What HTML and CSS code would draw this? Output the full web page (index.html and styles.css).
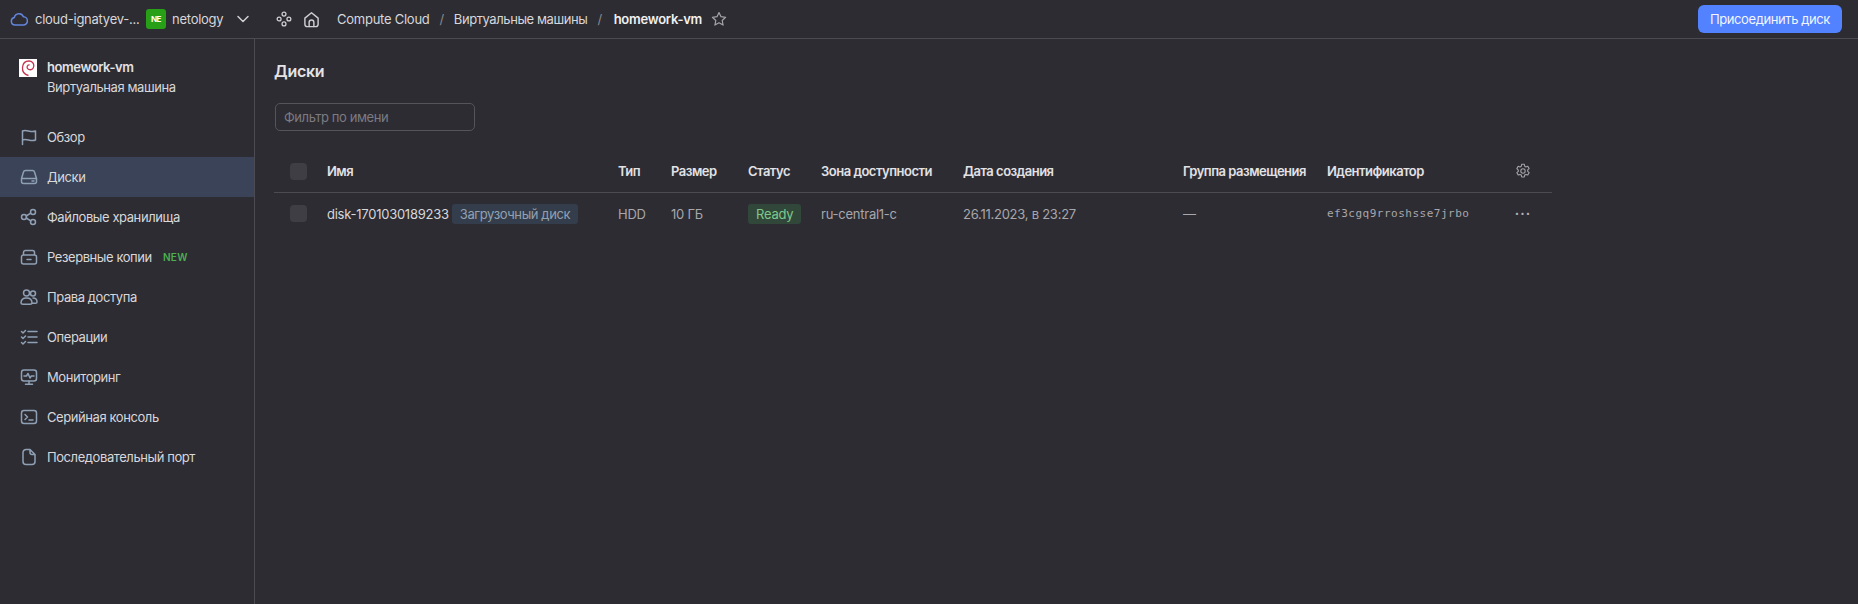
FILE: index.html
```html
<!DOCTYPE html>
<html lang="ru">
<head>
<meta charset="utf-8">
<title>Диски</title>
<link rel="stylesheet" href="styles.css">
</head>
<body>
<header class="topbar">
  <svg class="ico cloud" viewBox="0 0 18 18"><path d="M5 15a3.800 3.800 0 0 1-.7-7.500 4.800 4.800 0 0 1 9.100-.7A4.100 4.100 0 0 1 13.200 15z"/></svg>
  <span class="tb-text lat cloud-name">cloud-ignatyev-...</span>
  <span class="org-badge">NE</span>
  <span class="tb-text lat org-name">netology</span>
  <svg class="ico chev" viewBox="0 0 16 16"><path d="M3 5.500l5 5 5-5"/></svg>
  <svg class="ico services" viewBox="0 0 18 18"><circle cx="9" cy="3.500" r="2.200"/><circle cx="3.500" cy="9" r="2.200"/><circle cx="14.500" cy="9" r="2.200"/><circle cx="9" cy="14.500" r="2.200"/></svg>
  <svg class="ico home" viewBox="0 0 18 18"><path d="M2 7.500L9 1.800l7 5.700V14a2.500 2.500 0 0 1-2.500 2.500h-9A2.500 2.500 0 0 1 2 14z"/><path d="M6.500 16.500V12a2.500 2.500 0 0 1 5 0v4.500"/></svg>
  <nav class="crumbs">
    <span class="lat">Compute Cloud</span><span class="sep">/</span><span>Виртуальные машины</span><span class="sep">/</span><span class="lat cur">homework-vm</span>
  </nav>
  <svg class="ico star" viewBox="0 0 16 16"><path d="M8 1.500l2 4.200 4.600.6-3.400 3.200.9 4.600L8 11.800l-4.100 2.300.9-4.600L1.400 6.300 6 5.700z"/></svg>
  <button class="primary">Присоединить диск</button>
</header>
<div class="body">
  <aside class="side">
    <div class="vm">
      <svg class="debian" viewBox="0 0 18 18"><rect width="18" height="18" fill="#fff"/><path d="M9.500 16.500C5.500 15.500 3.200 12.500 3.500 8.500 3.800 4.500 6.500 2 10 2c3 0 5 2.200 4.800 5-.2 2.500-2.200 4-4.300 3.700-1.800-.3-2.700-1.800-2.300-3.300.3-1.100 1.300-1.700 2.400-1.500" fill="none" stroke="#c5344f" stroke-width="1.300"/></svg>
      <div>
        <div class="vm-name">homework-vm</div>
        <div class="vm-type">Виртуальная машина</div>
      </div>
    </div>
    <ul class="menu">
      <li><svg class="ico m" viewBox="0 0 18 18"><path d="M2.500 16.500V3c4-2 8 2 13 0v9c-5 2-9-2-13 0"/></svg>Обзор</li>
      <li class="active"><svg class="ico m" viewBox="0 0 18 18"><path d="M1.500 10.500l2-6.500a2 2 0 0 1 2-1.500h7a2 2 0 0 1 2 1.500l2 6.500v3a2 2 0 0 1-2 2h-11a2 2 0 0 1-2-2zM1.500 10.500h15M12 13h2"/></svg>Диски</li>
      <li><svg class="ico m" viewBox="0 0 18 18"><circle cx="4" cy="9" r="2.500"/><circle cx="13" cy="4" r="2.500"/><circle cx="13" cy="14" r="2.500"/><path d="M6.200 8l4.600-2.800M6.200 10l4.600 2.800"/></svg>Файловые хранилища</li>
      <li><svg class="ico m" viewBox="0 0 18 18"><path d="M1.500 9a2 2 0 0 1 2-2h11a2 2 0 0 1 2 2v5a2 2 0 0 1-2 2h-11a2 2 0 0 1-2-2zM3.500 7V4.500a2 2 0 0 1 2-2h7a2 2 0 0 1 2 2V7M7 11.500h4"/></svg>Резервные копии<span class="new">NEW</span></li>
      <li><svg class="ico m" viewBox="0 0 18 18"><circle cx="6.500" cy="5" r="3"/><circle cx="13" cy="5.500" r="2.500"/><path d="M1 15c0-3 2-5 5.500-5s5.500 2 5.500 5c0 1-1 1.200-2 1.200H3c-1 0-2-.2-2-1.200zM13 10c2.500 0 4 1.500 4 4 0 1-.7 1.300-1.500 1.300H12"/></svg>Права доступа</li>
      <li><svg class="ico m" viewBox="0 0 18 18"><path d="M8 3.500h9M8 9h9M8 14.500h9M1.500 3.500l1.500 1.500 2.500-2.500M1.500 9l1.500 1.500L5.500 8M1.500 14.500l1.500 1.500 2.500-2.500"/></svg>Операции</li>
      <li><svg class="ico m" viewBox="0 0 18 18"><rect x="1.500" y="2" width="15" height="11" rx="2.500"/><path d="M4 8h2.500L8 5.500l2 4.500 1.300-2H14M9 13v3M5.500 16.200h7"/></svg>Мониторинг</li>
      <li><svg class="ico m" viewBox="0 0 18 18"><rect x="1.500" y="2.500" width="15" height="13" rx="2.500"/><path d="M5 6.500L7.500 9 5 11.500M9 12h4"/></svg>Серийная консоль</li>
      <li><svg class="ico m" viewBox="0 0 18 18"><path d="M10 1.500H6a3 3 0 0 0-3 3v9a3 3 0 0 0 3 3h6a3 3 0 0 0 3-3V6.500zM10 1.500v3a2 2 0 0 0 2 2h3"/></svg>Последовательный порт</li>
    </ul>
  </aside>
  <main class="content">
    <h1>Диски</h1>
    <div class="filter">Фильтр по имени</div>
    <table class="grid">
      <thead>
        <tr>
          <th class="c-check"><span class="check"></span></th>
          <th class="c-name">Имя</th>
          <th class="c-type">Тип</th>
          <th class="c-size">Размер</th>
          <th class="c-status">Статус</th>
          <th class="c-zone">Зона доступности</th>
          <th class="c-date">Дата создания</th>
          <th class="c-group">Группа размещения</th>
          <th class="c-id">Идентификатор</th>
          <th class="c-act"><svg class="ico gear" viewBox="0 0 16 16"><path d="M6.700 1.300h2.600l.4 1.900 1.300.7 1.800-.6 1.300 2.300-1.400 1.300v1.500l1.400 1.300-1.300 2.300-1.800-.6-1.300.7-.4 1.900H6.700l-.4-1.900-1.300-.7-1.800.6-1.300-2.300 1.400-1.300V7.100L1.900 5.600l1.300-2.300 1.800.6 1.300-.7z"/><circle cx="8" cy="8" r="2.200"/></svg></th>
        </tr>
      </thead>
      <tbody>
        <tr>
          <td><span class="check"></span></td>
          <td><span class="disk">disk-1701030189233</span><span class="tag boot">Загрузочный диск</span></td>
          <td>HDD</td>
          <td>10 ГБ</td>
          <td><span class="tag ready">Ready</span></td>
          <td>ru-central1-c</td>
          <td>26.11.2023, в 23:27</td>
          <td>—</td>
          <td class="mono">ef3cgq9rroshsse7jrbo</td>
          <td class="dots">•••</td>
        </tr>
      </tbody>
    </table>
  </main>
</div>
</body>
</html>
```
FILE: styles.css
```css
* { box-sizing: border-box; }
html, body { margin: 0; height: 100%; }
body {
  background: #2d2c33;
  color: #d6d5d8;
  font-family: Inter, "Noto Sans", sans-serif;
  font-size: 13px;
  letter-spacing: -.42px;
  overflow: hidden;
}
.lat { letter-spacing: -.25px; }
.ico { fill: none; stroke: #8fa0b5; stroke-width: 1.500; stroke-linecap: round; stroke-linejoin: round; flex: none; }
.topbar {
  height: 39px;
  display: flex;
  align-items: center;
  border-bottom: 1px solid #4c4b51;
  padding-left: 10px;
  padding-right: 16px;
}
.tb-text { color: #d8d7da; white-space: nowrap; }
.cloud { width: 18px; height: 18px; stroke: #6385dc; }
.cloud-name { margin-left: 7px; width: 104px; }
.org-badge {
  width: 20px; height: 20px;
  background: #27a017; border-radius: 3px;
  color: #fff; font-size: 8px; font-weight: 700;
  display: flex; align-items: center; justify-content: center;
  margin-left: 7px;
}
.org-name { margin-left: 6px; width: 60px; }
.chev { width: 16px; height: 16px; margin-left: 3px; stroke: #d0d0d3; }
.services { width: 16px; height: 16px; margin-left: 25px; stroke: #d0d0d3; stroke-width: 1.400; }
.home { width: 17px; height: 17px; margin-left: 11px; stroke: #d0d0d3; }
.crumbs { margin-left: 17px; display: flex; color: #d8d7da; white-space: nowrap; }
.crumbs .sep { color: #8a898e; margin: 0 10px; }
.crumbs .cur { color: #f0f0f1; font-weight: 600; margin-left: 2px; }
.star { width: 16px; height: 16px; margin-left: 9px; stroke: #a5a4a8; stroke-width: 1.200; }
.primary {
  margin-left: auto;
  width: 144px; height: 28px;
  background: #5282ff; color: #f2f5ff;
  border: 0; border-radius: 6px;
  font: inherit; font-size: 13px; letter-spacing: -.4px;
}
.body { display: flex; height: 565px; }
.side { width: 255px; border-right: 1px solid #4c4b51; flex: none; }
.vm { display: flex; gap: 10px; padding: 18px 0 0 19px; height: 78px; }
.debian { width: 18px; height: 18px; flex: none; margin-top: 2px; }
.vm-name { font-weight: 600; font-size: 13px; line-height: 20px; color: #e2e1e4; }
.vm-type { line-height: 20px; color: #d8d7da; }
.menu { list-style: none; margin: 0; padding: 0; }
.menu li { height: 40px; display: flex; align-items: center; padding-left: 20px; color: #d8d7da; }
.menu li.active { background: #3a4358; }
.menu .m { width: 18px; height: 18px; margin-right: 9px; }
.new { color: #4caf50; font-size: 10px; font-weight: 600; margin-left: 11px; letter-spacing: .3px; }
.content { flex: 1; padding: 21px 0 0 19px; }
h1 { margin: 0; font-size: 16px; font-weight: 600; line-height: 22px; color: #e4e3e6; letter-spacing: -.25px; }
.filter {
  margin: 21px 0 0 1px;
  width: 200px; height: 28px;
  border: 1px solid #55545a; border-radius: 5px;
  color: #7c7b81; line-height: 26px; padding-left: 8px;
}
.grid { margin-top: 20px; border-collapse: collapse; table-layout: fixed; width: 1278px; }
.grid th { height: 41px; border-bottom: 1px solid #4c4b51; text-align: left; font-weight: 600; color: #e2e1e4; padding: 0; white-space: nowrap; letter-spacing: -.5px; }
.grid td { height: 43px; padding: 0; color: #a8a7ab; white-space: nowrap; letter-spacing: -.25px; }
.grid td:nth-child(2) { color: #d8d7da; }
.c-check { width: 53px; }
.c-name { width: 291px; }
.c-type { width: 53px; }
.c-size { width: 77px; }
.c-status { width: 73px; }
.c-zone { width: 142px; }
.c-date { width: 220px; }
.c-group { width: 144px; }
.c-id { width: 188px; }
.check { display: block; width: 17px; height: 17px; margin-left: 16px; background: #3f3e44; border-radius: 4px; }
.tag { display: inline-block; height: 20px; line-height: 20px; border-radius: 3px; padding: 0 8px; }
.boot { background: #343d4b; color: #93a0b0; margin-left: 3px; letter-spacing: -.4px; }
.ready { background: #30473a; color: #7fc98a; }
.mono { font-family: "DejaVu Sans Mono", monospace; font-size: 11px; letter-spacing: .5px !important; }
.dots { font-size: 7px; letter-spacing: 1.500px !important; color: #b5b4b8 !important; }
.gear { width: 16px; height: 16px; stroke-width: 1.100; stroke: #a5a4a8; display: block; }
```
